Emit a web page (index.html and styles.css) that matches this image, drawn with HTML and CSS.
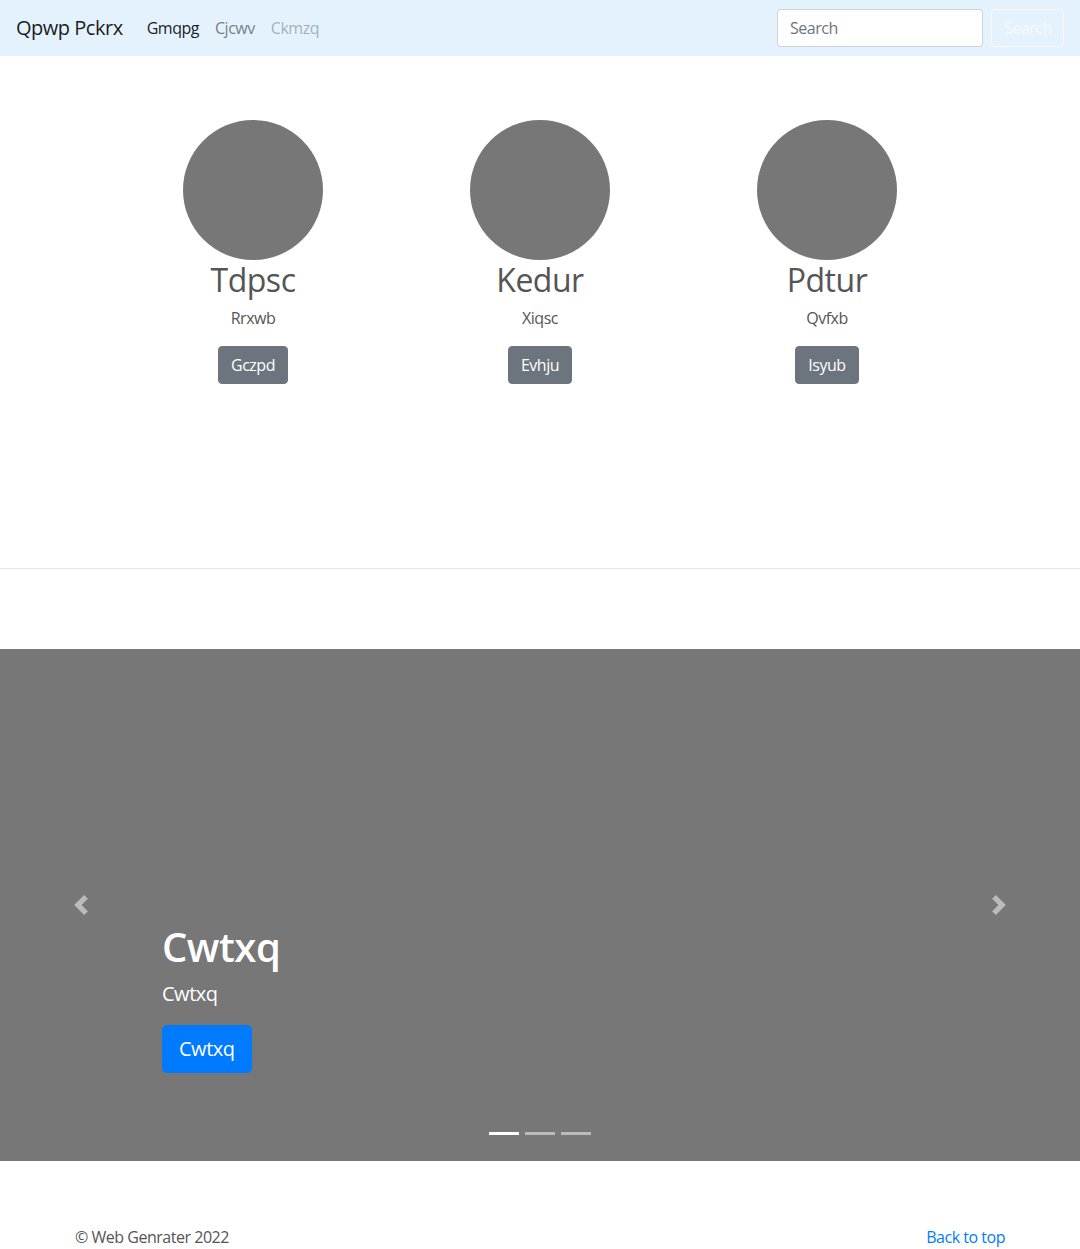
FILE: index.html
```html
<!DOCTYPE html>
<html lang="en">
<head>
<meta charset="utf-8">
<title>Qpwp Pckrx</title>
<link rel="stylesheet" href="styles.css">
</head>
<body>
<nav class="navbar">
  <div class="nav-left">
    <a class="brand" href="#">Qpwp Pckrx</a>
    <ul class="nav-links">
      <li><a class="nav-link active" href="#">Gmqpg</a></li>
      <li><a class="nav-link" href="#">Cjcwv</a></li>
      <li><a class="nav-link disabled" href="#">Ckmzq</a></li>
    </ul>
  </div>
  <form class="search">
    <input class="search-input" type="text" placeholder="Search">
    <button class="search-btn" type="button">Search</button>
  </form>
</nav>

<section class="marketing">
  <div class="cols">
    <div class="col">
      <div class="avatar"></div>
      <h2 class="col-title">Tdpsc</h2>
      <p class="col-text">Rrxwb</p>
      <p class="col-action"><a class="btn btn-secondary" href="#">Gczpd</a></p>
    </div>
    <div class="col">
      <div class="avatar"></div>
      <h2 class="col-title">Kedur</h2>
      <p class="col-text">Xiqsc</p>
      <p class="col-action"><a class="btn btn-secondary" href="#">Evhju</a></p>
    </div>
    <div class="col">
      <div class="avatar"></div>
      <h2 class="col-title">Pdtur</h2>
      <p class="col-text">Qvfxb</p>
      <p class="col-action"><a class="btn btn-secondary" href="#">Isyub</a></p>
    </div>
  </div>
</section>

<hr class="divider">

<section class="carousel">
  <a class="control prev" href="#">
    <svg width="20" height="20" viewBox="0 0 8 8"><path fill="#fff" d="M5.25 0l-4 4 4 4 1.5-1.5L4.25 4l2.5-2.5L5.25 0z"/></svg>
  </a>
  <a class="control next" href="#">
    <svg width="20" height="20" viewBox="0 0 8 8"><path fill="#fff" d="M2.75 0l-1.5 1.5L3.75 4l-2.5 2.5L2.75 8l4-4-4-4z"/></svg>
  </a>
  <div class="caption">
    <h1 class="caption-title">Cwtxq</h1>
    <p class="caption-lead">Cwtxq</p>
    <p class="caption-action"><a class="btn btn-lg btn-primary" href="#">Cwtxq</a></p>
  </div>
  <ol class="indicators">
    <li class="active"></li>
    <li></li>
    <li></li>
  </ol>
</section>

<footer class="footer">
  <p class="copy">© Web Genrater 2022</p>
  <p class="back"><a href="#">Back to top</a></p>
</footer>
</body>
</html>
```

FILE: styles.css
```css
* { box-sizing: border-box; }

body {
  margin: 0;
  font-family: "Open Sans", "Noto Sans", sans-serif;
  font-size: 16px;
  line-height: 1.5;
  letter-spacing: -0.03em;
  color: #555;
  background: #fff;
}

a { text-decoration: none; }

.navbar {
  display: flex;
  align-items: center;
  justify-content: space-between;
  height: 56px;
  padding: 8px 16px;
  background: #e3f2fd;
}

.nav-left {
  display: flex;
  align-items: center;
}

.brand {
  font-size: 20px;
  line-height: 30px;
  color: rgba(0, 0, 0, 0.9);
  margin-right: 16px;
}

.nav-links {
  display: flex;
  list-style: none;
  margin: 0;
  padding: 0;
}

.nav-link {
  display: block;
  padding: 8px;
  color: rgba(0, 0, 0, 0.5);
}

.nav-link.active { color: rgba(0, 0, 0, 0.9); }
.nav-link.disabled { color: rgba(0, 0, 0, 0.3); }

.search {
  display: flex;
  align-items: center;
}

.search-input {
  width: 206px;
  height: 38px;
  padding: 6px 12px;
  font-family: inherit;
  font-size: 16px;
  letter-spacing: inherit;
  color: #495057;
  background: #fff;
  border: 1px solid #ced4da;
  border-radius: 4px;
  margin-right: 8px;
}

.search-input::placeholder { color: #6c757d; }

.search-btn {
  width: 73px;
  height: 38px;
  padding: 6px 12px;
  font-family: inherit;
  font-size: 16px;
  letter-spacing: inherit;
  color: #f8f9fa;
  background: transparent;
  border: 1px solid #f8f9fa;
  border-radius: 4px;
}

.marketing {
  padding-top: 64px;
}

.cols {
  display: grid;
  grid-template-columns: repeat(3, 287px);
  justify-content: center;
}

.col {
  display: flex;
  flex-direction: column;
  align-items: center;
  text-align: center;
}

.avatar {
  width: 140px;
  height: 140px;
  border-radius: 50%;
  background: #777;
}

.col-title {
  margin: 1px 0 7px;
  font-size: 32px;
  font-weight: 400;
  line-height: 1.2;
}

.col-text {
  margin: 0 0 16px;
}

.col-action {
  margin: 0;
}

.btn {
  display: inline-block;
  padding: 6px 12px;
  font-size: 16px;
  line-height: 24px;
  border: 1px solid transparent;
  border-radius: 4px;
  color: #fff;
}

.btn-secondary {
  background: #6c757d;
  border-color: #6c757d;
}

.btn-primary {
  background: #007bff;
  border-color: #007bff;
}

.btn-lg {
  padding: 8px 16px;
  font-size: 20px;
  line-height: 30px;
  border-radius: 5px;
}

.divider {
  margin: 184px 0 80px;
  border: 0;
  border-top: 1px solid rgba(0, 0, 0, 0.1);
  height: 0;
}

.carousel {
  position: relative;
  height: 512px;
  background: #777;
  margin-bottom: 64px;
}

.control {
  position: absolute;
  top: 0;
  bottom: 0;
  width: 15%;
  display: flex;
  align-items: center;
  justify-content: center;
  opacity: 0.5;
}

.control.prev { left: 0; }
.control.next { right: 0; }

.caption {
  position: absolute;
  left: 15%;
  right: 15%;
  bottom: 52px;
  padding: 20px 0;
  color: #fff;
  text-align: left;
}

.caption-title {
  margin: 0 0 8px;
  font-size: 40px;
  font-weight: 600;
  line-height: 1.2;
}

.caption-lead {
  margin: 0 0 16px;
  font-size: 20px;
  line-height: 30px;
}

.caption-action {
  margin: 0 0 16px;
}

.indicators {
  position: absolute;
  left: 0;
  right: 0;
  bottom: 0;
  margin: 0 0 16px;
  padding: 0;
  list-style: none;
  display: flex;
  justify-content: center;
}

.indicators li {
  width: 30px;
  height: 23px;
  margin: 0 3px;
  border-top: 10px solid transparent;
  border-bottom: 10px solid transparent;
  background: rgba(255, 255, 255, 0.5);
  background-clip: padding-box;
}

.indicators li.active { background-color: #fff; }

.footer {
  width: 930px;
  margin: 0 auto;
  display: flex;
  justify-content: space-between;
}

.footer p { margin: 0 0 16px; }

.copy { color: #555; }

.back a { color: #007bff; }
```
